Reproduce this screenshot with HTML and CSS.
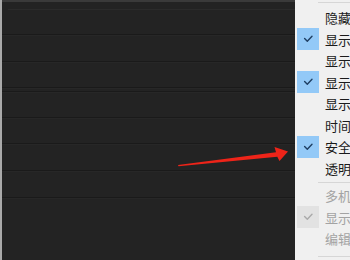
FILE: index.html
```html
<!DOCTYPE html>
<html>
<head>
<meta charset="utf-8">
<link rel="stylesheet" href="styles.css">
</head>
<body>
<div class="screen">
  <div class="edge"></div>
  <div class="panel">
    <div class="band"></div>
    <div class="row r-head"><div class="inner-line"></div></div>
    <div class="row r26"></div>
    <div class="row r25"></div>
    <div class="row r3"></div>
    <div class="row r25"></div>
    <div class="row r25"></div>
    <div class="row r26"></div>
    <div class="row r26"></div>
  </div>
  <div class="menu">
    <div class="sep sep-top"></div>
    <div class="item"><span class="chk"></span><span class="lbl">隐藏窗口</span></div>
    <div class="item"><span class="chk on"><svg viewBox="0 0 22 22"><path d="M7.6 10.6 L10.3 13.3 L15 8.3"/></svg></span><span class="lbl">显示标题</span></div>
    <div class="item"><span class="chk"></span><span class="lbl">显示菜单</span></div>
    <div class="item"><span class="chk on"><svg viewBox="0 0 22 22"><path d="M7.6 10.6 L10.3 13.3 L15 8.3"/></svg></span><span class="lbl">显示工具栏</span></div>
    <div class="item"><span class="chk"></span><span class="lbl">显示状态栏</span></div>
    <div class="item"><span class="chk"></span><span class="lbl">时间</span></div>
    <div class="item"><span class="chk on"><svg viewBox="0 0 22 22"><path d="M7.6 10.6 L10.3 13.3 L15 8.3"/></svg></span><span class="lbl">安全模式</span></div>
    <div class="item"><span class="chk"></span><span class="lbl">透明度</span></div>
    <div class="sep"></div>
    <div class="item dis"><span class="chk"></span><span class="lbl">多机操作</span></div>
    <div class="item dis"><span class="chk off"><svg viewBox="0 0 22 22"><path d="M7.6 10.6 L10.3 13.3 L15 8.3"/></svg></span><span class="lbl">显示全部</span></div>
    <div class="item dis"><span class="chk"></span><span class="lbl">编辑</span></div>
    <div class="sep sep-bottom"></div>
  </div>
  <svg class="arrow" viewBox="0 0 350 260" width="350" height="260">
    <polygon points="178,165 276,152.2 274.5,147 288,151.5 279.5,161 277.3,156.8 178.5,166.2"/>
  </svg>
</div>
</body>
</html>
```

FILE: styles.css
```css
html, body {
  margin: 0;
  padding: 0;
  width: 350px;
  height: 260px;
  overflow: hidden;
  background: #232323;
}
.screen {
  position: relative;
  display: flex;
  width: 350px;
  height: 260px;
}
.edge {
  width: 2px;
  background: #a9a9a9;
  flex: none;
}
.panel {
  width: 293px;
  flex: none;
  background: #232323;
  display: flex;
  flex-direction: column;
}
.band {
  height: 2px;
  background: #3a3a3a;
}
.row {
  border-bottom: 1px solid #1a1a1a;
  box-shadow: 0 1px 0 #272727;
}
.r-head {
  height: 32px;
}
.inner-line {
  margin: 7px 0 0 6px;
  border-top: 1px solid #2b2b2b;
}
.r26 { height: 26px; }
.r25 { height: 25px; }
.r3 { height: 3px; }
.menu {
  flex: 1;
  background: #f0f0f0;
  padding-left: 2px;
  font-family: "Noto Sans CJK SC", "Microsoft YaHei", sans-serif;
  font-size: 13px;
  color: #1a1a1a;
  overflow: hidden;
  white-space: nowrap;
}
.sep {
  margin: 3px 0 2px 21px;
  height: 1px;
  background: #d6d6d6;
}
.sep-top {
  margin: 2px 0 4px 21px;
}
.sep-bottom {
  margin-top: 6px;
}
.item {
  height: 21.5px;
  display: flex;
  align-items: center;
}
.chk {
  width: 22px;
  height: 22px;
  flex: none;
  margin-right: 6px;
}
.chk svg {
  display: block;
  width: 22px;
  height: 22px;
}
.chk path {
  fill: none;
  stroke: #1f3f63;
  stroke-width: 1.4;
  stroke-linecap: round;
  stroke-linejoin: round;
}
.chk.on {
  background: #93c9f7;
}
.chk.off {
  background: #e2e2e2;
}
.chk.off path {
  stroke: #aaaaaa;
}
.lbl {
  line-height: 15px;
}
.dis {
  color: #a3a3a3;
}
.arrow {
  position: absolute;
  left: 0;
  top: 0;
}
.arrow polygon {
  fill: #ee2419;
}
```
